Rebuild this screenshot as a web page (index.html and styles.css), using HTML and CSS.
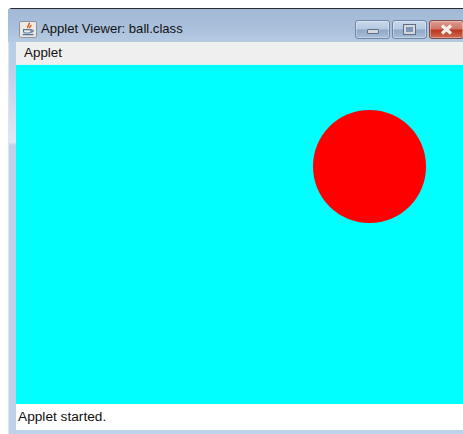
FILE: index.html
```html
<!DOCTYPE html>
<html lang="en">
<head>
<meta charset="utf-8">
<title>Applet Viewer: ball.class</title>
<link rel="stylesheet" href="styles.css">
</head>
<body>
<div class="window">
  <header class="titlebar">
    <svg class="app-icon" width="18" height="17" viewBox="0 0 18 17">
      <rect x="0.5" y="0.5" width="17" height="16" rx="1.5" fill="#efe9e2" stroke="#8c93a3"/>
      <path d="M10 1.8c1.6 1.6-2.4 3-1.2 5.2M11.8 4c.7 1.1-1.7 1.8-.9 3" fill="none" stroke="#d4541a" stroke-width="1.5"/>
      <path d="M4.5 8.6h7.5v1.8c0 1-1 1.6-2 1.6H6.500c-1 0-2-.6-2-1.600zM12 9h1.600c1.200 0 1 1.900-1.400 2.100" fill="none" stroke="#56789e" stroke-width="1.100"/>
      <path d="M3.500 13.600h11" stroke="#56789e" stroke-width="1.400"/>
    </svg>
    <span class="title">Applet Viewer: ball.class</span>
    <div class="controls">
      <div class="btn"><span class="glyph-min"></span></div>
      <div class="btn"><span class="glyph-max"></span></div>
      <div class="btn btn-close">
        <svg width="15" height="11" viewBox="0 0 15 11"><path d="M3 1.500l9 8M12 1.500l-9 8" stroke="#f1eeec" stroke-width="3.200"/></svg>
      </div>
    </div>
  </header>
  <nav class="menubar"><span class="menu-item">Applet</span></nav>
  <main class="canvas"><div class="ball"></div></main>
  <footer class="status">Applet started.</footer>
</div>
</body>
</html>
```
FILE: styles.css
```css
html, body {
  margin: 0;
  height: 100%;
  background: #fff;
  overflow: hidden;
}

body {
  padding-top: 8px;
  box-sizing: border-box;
  font-family: "Liberation Sans", Arial, sans-serif;
  color: #111;
}

.window {
  margin-left: 8px;
  height: 426px;
  box-sizing: border-box;
  padding: 0 0 4px 7px;
  border-top: 1px solid #2b2b2b;
  border-left: 1px solid #dfe3ea;
  border-top-left-radius: 4px;
  /* Aero-style frame: brightens down the side, then a hard step back to the base blue */
  background: linear-gradient(#b8cde6 52px, #dfe8f5 133px, #bdd1e9 136px, #bed2e9 100%);
  display: flex;
  flex-direction: column;
}

.titlebar {
  height: 33px;
  flex: none;
  margin-left: -8px;
  padding-left: 11px;
  display: flex;
  align-items: center;
  gap: 4px;
  background: linear-gradient(#a1b9d6, #aac1dc 60%, #b6cae2);
}

.app-icon {
  flex: none;
  margin-top: 7px;
}

.title {
  font-size: 13.100px;
  margin-top: 6px;
}

.controls {
  margin-left: auto;
  align-self: flex-start;
  display: flex;
  gap: 2px;
  margin-right: -1px;
  margin-top: 11px;
}

.btn {
  width: 35px;
  height: 19px;
  box-sizing: border-box;
  border: 1px solid #6f87a6;
  border-radius: 3px;
  display: flex;
  align-items: center;
  justify-content: center;
  background: linear-gradient(#c8d8ea 0, #b4c9e0 48%, #8fa8c6 52%, #a8bfd9 100%);
  box-shadow: inset 0 0 0 1px rgba(255, 255, 255, 0.35);
}

.btn-close {
  border-color: #7d4b4b;
  background: linear-gradient(#dd9b8c 0, #d0776a 45%, #b9391f 55%, #cf6a55 100%);
}

.glyph-min {
  width: 10px;
  height: 3px;
  margin-top: 3px;
  background: #d5d8dc;
  border: 1px solid #5d6f86;
  border-radius: 1px;
}

.glyph-max {
  width: 7px;
  height: 5px;
  border: 2px solid #d5d8dc;
  outline: 1px solid #5d6f86;
  background: #7f97b4;
}

.menubar {
  height: 22px;
  flex: none;
  background: #efefef;
  border-bottom: 1px solid #d8f4f4;
  display: flex;
  align-items: center;
  padding-left: 8px;
}

.menu-item {
  font-size: 13.400px;
  margin-top: -1px;
}

.canvas {
  position: relative;
  flex: 1;
  background: #00ffff;
}

.ball {
  position: absolute;
  left: 297px;
  top: 45px;
  width: 112.500px;
  height: 112.500px;
  border-radius: 50%;
  background: #ff0000;
}

.status {
  height: 26px;
  flex: none;
  background: #fff;
  display: flex;
  align-items: center;
  padding-left: 2px;
  padding-bottom: 2px;
  box-sizing: border-box;
  font-size: 13.700px;
}
```
